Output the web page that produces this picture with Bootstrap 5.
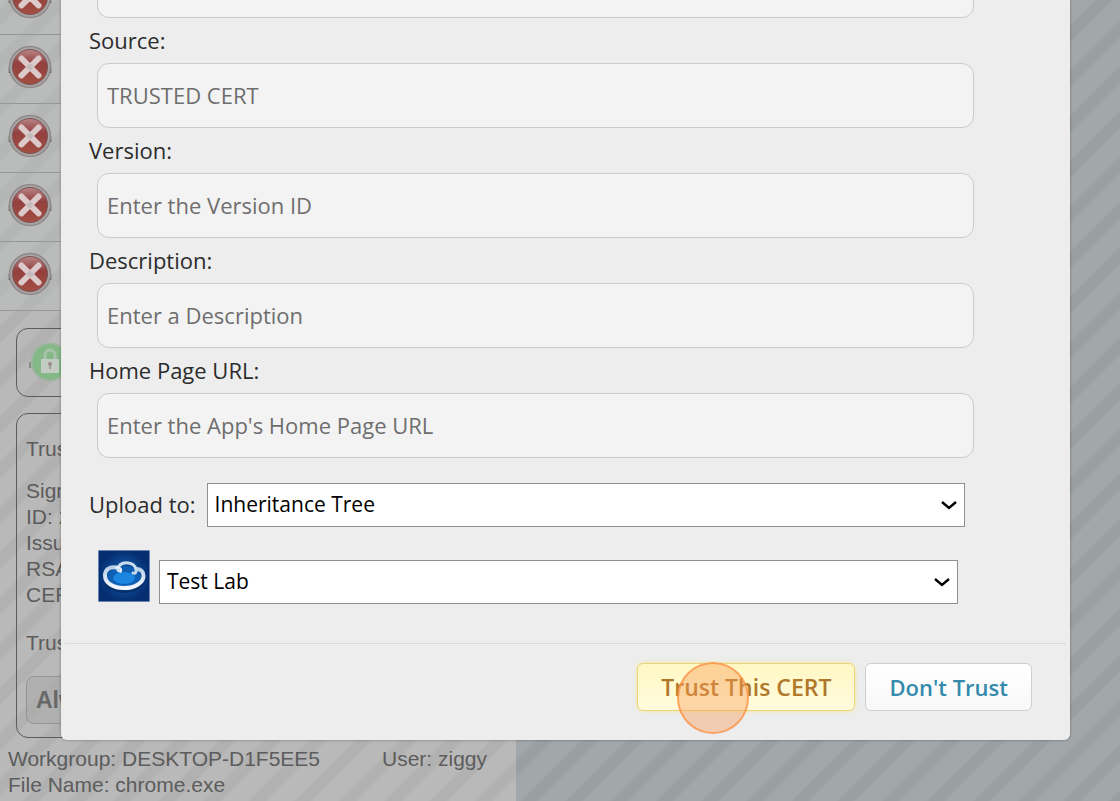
<!DOCTYPE html>
<html lang="en">
<head>
<meta charset="utf-8">
<meta name="viewport" content="width=device-width, initial-scale=1">
<title>Trust This CERT</title>
<link href="https://cdn.jsdelivr.net/npm/bootstrap@5.3.0/dist/css/bootstrap.min.css" rel="stylesheet">
<script src="https://cdn.jsdelivr.net/npm/bootstrap@5.3.0/dist/js/bootstrap.bundle.min.js"></script>
<style>
  :root { --form-font: "Trebuchet MS", "Open Sans", "Noto Sans", sans-serif; }
  body { background: #a1a6a9; font-family: "Liberation Sans", Arial, sans-serif; }
  .stage {
    min-height: 100vh;
    background: repeating-linear-gradient(135deg, #a2a7aa 0 5px, #9a9fa2 8px 17px, #a2a7aa 20px 32px);
  }
  .agent-panel {
    width: 516px;
    min-height: 100vh;
    color: #5c5c5c;
    font-size: 21px;
    line-height: 26px;
    background: repeating-linear-gradient(135deg, #b9b9b9 0 5px, #b1b1b1 8px 17px, #b9b9b9 20px 32px);
  }
  .status-row { height: 69px; padding: 9px 0 0 7px; border-bottom: 1px solid #979797; background: rgba(190,194,192,.3); }
  .status-row:first-child { height: 35px; overflow: hidden; padding: 0 0 0 7px; }
  .status-row:first-child svg { margin-top: -26px; }
  .outline-box { border: 1px solid #5c5c5c; border-radius: 12px; margin-left: 16px; margin-right: 16px; }
  .lock-box { height: 69px; margin-top: 17px; padding-left: 10px; }
  .detail-box { margin-top: 16px; padding: 22px 9px 13px; }
  .second-title { padding-top: 22px; }
  .always-btn { height: 48px; margin-top: 20px; padding: 0 9px; font-size: 23px; font-weight: 700; color: #686868; border: 1px solid #949494; border-radius: 8px; background: rgba(170,170,170,.6); }
  .foot-info { padding: 8px 8px 0; }
  .user-info { padding-left: 62px; }
  .dialog-layer { position: absolute; top: 0; left: 0; right: 0; padding: 0 50px 0 61px; }
  .dialog-card { background: #ededed; border-radius: 0 0 6px 6px; box-shadow: 0 0 3px rgba(0,0,0,.35); overflow: hidden; font-family: var(--form-font); font-size: 22px; line-height: 28px; color: #2c2c2c; }
  .dialog-fields { padding: 0 28px 39px; }
  .text-box { height: 65px; width: auto; margin: 0 68px 0 8px; padding: 0 9px 1px; border: 1px solid #cbcbcb; border-radius: 12px; background: #f3f3f3; font-size: 22px; color: #6e6e6e; }
  .text-box::placeholder { color: #6e6e6e; opacity: 1; }
  .stretch { display: grid; }
  .cut-top { margin-top: -47px; }
  .form-line { padding-top: 8px; }
  .form-line label { padding-bottom: 9px; }
  .pick { height: 44px; padding: 0 30px 2px 7px; border: 1px solid #8f8f8f; border-radius: 0; font-size: 21px; line-height: 30px; color: #000; background-color: #fff; background-position: right 6px center; background-size: 18px 18px;
    background-image: url("data:image/svg+xml,%3Csvg xmlns='http://www.w3.org/2000/svg' viewBox='0 0 18 18'%3E%3Cpath fill='none' stroke='%23000' stroke-width='2.4' d='M2 6l7 6 7-6'/%3E%3C/svg%3E"); }
  .upload-line { padding-top: 25px; padding-right: 77px; gap: 11px; }
  .upload-line label { padding-bottom: 2px; }
  .group-line { padding: 23px 84px 0 9px; gap: 9px; }
  .group-line .pick { margin-top: 10px; }
  .dialog-foot { margin: 0 4px; padding: 19px 34px 29px; gap: 10px; border-top: 1px solid #d9d9d9; }
  .dialog-foot button { height: 48px; padding: 0 23px; border-radius: 6px; font-size: 22px; line-height: 28px; font-weight: 600; }
  .dialog-foot .trust-btn { font-size: 23px; position: relative; color: #b0782a; border: 1px solid #ecd373; background: linear-gradient(#fff8c4, #fffbdd); box-shadow: 0 0 4px #f8e8a0; }
  .refuse-btn { color: #348aab; border: 1px solid #cfcfcf; background: linear-gradient(#fff, #f8f8f8); }
  .tap-mark { position: absolute; left: 39px; top: -2px; width: 72px; height: 72px; border-radius: 50%; border: 2px solid rgba(250,145,70,.75); background: rgba(250,155,85,.4); pointer-events: none; }
</style>
</head>
<body>
<svg class="position-absolute" width="0" height="0" xmlns="http://www.w3.org/2000/svg">
  <defs>
    <linearGradient id="redFill" x1="0" y1="0" x2="0" y2="1"><stop offset="0" stop-color="#b98486"/><stop offset=".4" stop-color="#93403f"/><stop offset="1" stop-color="#a34e40"/></linearGradient>
    <radialGradient id="skyFill"><stop offset="0" stop-color="#1568bd"/><stop offset="1" stop-color="#052e70"/></radialGradient>
    <linearGradient id="rimFill" x1="0" y1="0" x2="0" y2="1"><stop offset="0" stop-color="#b9cfe6"/><stop offset="1" stop-color="#f4f9ff"/></linearGradient>
  </defs>
  <symbol id="deny" viewBox="0 0 46 46">
    <path d="M2.500 23v6M43.500 23v6" stroke="#444" stroke-width="1.500"/>
    <circle cx="23" cy="23" r="20.500" fill="#a9a4a4" stroke="#8f8989" stroke-width="1.500"/>
    <circle cx="23" cy="23" r="17.500" fill="url(#redFill)" stroke="#7a5556" stroke-width="1"/>
    <path d="M14.500 14.500l17 17M31.500 14.500l-17 17" stroke="#dccaca" stroke-width="6" stroke-linecap="round"/>
    <circle cx="23" cy="23" r="3" fill="#c4bcbc"/>
  </symbol>
</svg>
<div class="stage position-relative overflow-hidden">
  <aside class="agent-panel">
    <div class="status-row"><svg class="d-block" width="46" height="46"><use href="#deny"/></svg></div>
    <div class="status-row"><svg class="d-block" width="46" height="46"><use href="#deny"/></svg></div>
    <div class="status-row"><svg class="d-block" width="46" height="46"><use href="#deny"/></svg></div>
    <div class="status-row"><svg class="d-block" width="46" height="46"><use href="#deny"/></svg></div>
    <div class="status-row"><svg class="d-block" width="46" height="46"><use href="#deny"/></svg></div>
    <div class="outline-box lock-box d-flex align-items-center">
      <svg width="46" height="42" viewBox="0 0 46 42"><path d="M3 20v6" stroke="#888" stroke-width="2"/><circle cx="23" cy="20" r="19.500" fill="#9fb5a0"/><circle cx="23" cy="20" r="17.500" fill="#84b886"/><path d="M18 17v-4a5 5 0 0 1 10 0v4" fill="none" stroke="#a9c2aa" stroke-width="3"/><rect x="14" y="17" width="18" height="14" fill="#c3ccc3"/><circle cx="23" cy="22" r="2" fill="#9a8a86"/><path d="M23 22v5" stroke="#9a8a86" stroke-width="1.500"/></svg>
    </div>
    <div class="outline-box detail-box">
      <div>Trust</div>
      <div class="pt-3">Signer<br>ID: 2<br>Issuer<br>RSA<br>CERT</div>
      <div class="second-title">Trust</div>
      <button type="button" class="always-btn">Always</button>
    </div>
    <div class="foot-info">
      <div class="d-flex"><span>Workgroup: DESKTOP-D1F5EE5</span><span class="user-info">User: ziggy</span></div>
      <div>File Name: chrome.exe</div>
    </div>
  </aside>
  <div class="dialog-layer">
    <section class="dialog-card" role="dialog" aria-label="Trust">
      <div class="dialog-fields">
        <div class="stretch cut-top"><input class="text-box" type="text" aria-label="Name"></div>
        <div class="form-line stretch"><label for="src">Source:</label><input id="src" class="text-box" type="text" placeholder="TRUSTED CERT"></div>
        <div class="form-line stretch"><label for="ver">Version:</label><input id="ver" class="text-box" type="text" placeholder="Enter the Version ID"></div>
        <div class="form-line stretch"><label for="desc">Description:</label><input id="desc" class="text-box" type="text" placeholder="Enter a Description"></div>
        <div class="form-line stretch"><label for="url">Home Page URL:</label><input id="url" class="text-box" type="text" placeholder="Enter the App's Home Page URL"></div>
        <div class="upload-line d-flex align-items-center">
          <label for="dest" class="text-nowrap">Upload to:</label>
          <select id="dest" class="form-select pick"><option>Inheritance Tree</option></select>
        </div>
        <div class="group-line d-flex align-items-start">
          <svg class="flex-shrink-0" width="52" height="52" viewBox="0 0 52 52">
            <rect width="52" height="52" fill="#c9dcf3"/><rect x=".5" y=".5" width="51" height="51" fill="url(#skyFill)"/>
            <ellipse cx="26" cy="31" rx="20" ry="12" fill="#031f52" opacity=".5"/>
            <ellipse cx="26" cy="26.500" rx="17" ry="10" fill="#0f5fb4"/>
            <ellipse cx="26" cy="28" rx="11" ry="6" fill="#1a86e0"/>
            <path d="M19 17.500C11 16 7 20 7 25.500c0 8 9 12.500 19 12.500 11 0 19.500-5.500 19.500-12 0-4.500-3-7-7-7" fill="none" stroke="url(#rimFill)" stroke-width="4" stroke-linecap="round"/>
            <path d="M22 21c-3 0-3-3-1-5 4-5 15-4 17 3 1 3-1 5-3 4" fill="none" stroke="#c9dbee" stroke-width="3" stroke-linecap="round"/>
            <path d="M18 17.500c4-.500 6 2 4.500 4" fill="none" stroke="#e9f2fb" stroke-width="2.200" stroke-linecap="round"/>
          </svg>
          <select class="form-select pick" aria-label="Group"><option>Test Lab</option></select>
        </div>
      </div>
      <div class="dialog-foot d-flex justify-content-end">
        <button type="button" class="trust-btn">Trust This CERT<span class="tap-mark"></span></button>
        <button type="button" class="refuse-btn">Don't Trust</button>
      </div>
    </section>
  </div>
</div>
</body>
</html>
